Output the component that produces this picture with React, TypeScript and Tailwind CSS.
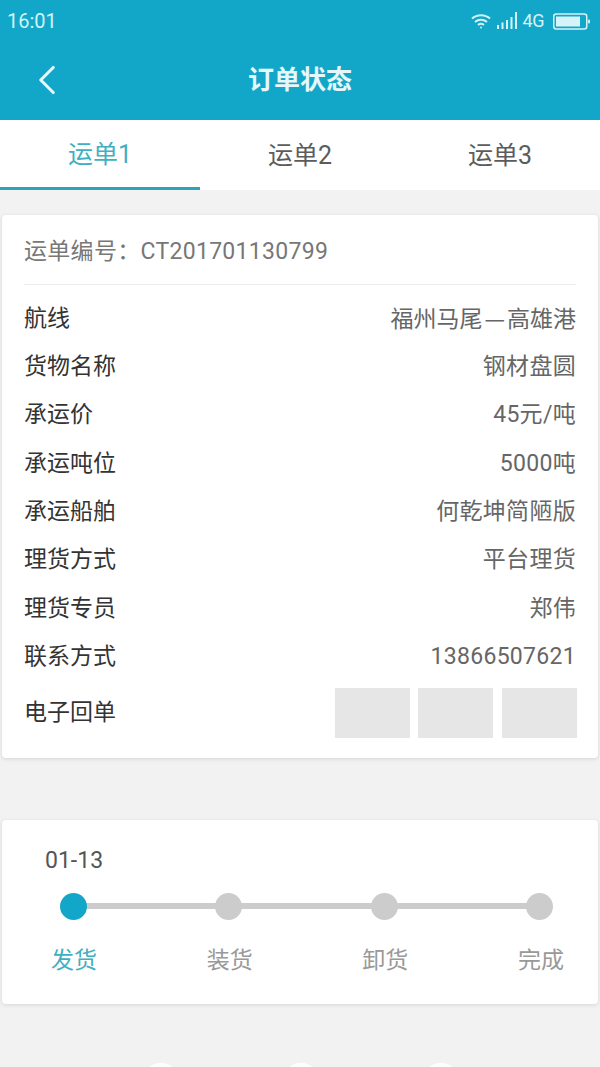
import { ChevronLeft } from 'lucide-react';

const FONT = "font-['Roboto','Noto_Sans_CJK_SC',sans-serif]";

const ROWS = [
  ['货物名称', '钢材盘圆'],
  ['承运价', '45元/吨'],
  ['承运吨位', '5000吨'],
  ['承运船舶', '何乾坤简陋版'],
  ['理货方式', '平台理货'],
  ['理货专员', '郑伟'],
  ['联系方式', '13866507621'],
];

const STEPS = ['发货', '装货', '卸货', '完成'];

function StatusIcons() {
  return (
    <div className="flex items-center gap-[6px]">
      <svg width="20" height="16" viewBox="0 0 20 16" fill="none" stroke="#d5f3f8" strokeWidth="2">
        <path d="M1 5.500C6 1 14 1 19 5.500" />
        <path d="M4 9c3.500-3 8.500-3 12 0" />
        <path d="M7 12c1.800-1.400 4.200-1.400 6 0" />
        <circle cx="10" cy="14.500" r="1" fill="#d5f3f8" stroke="none" />
      </svg>
      <svg width="20" height="18" viewBox="0 0 20 18" fill="#d5f3f8">
        <rect x="0" y="13" width="2" height="4" />
        <rect x="4.500" y="10.500" width="2" height="6.500" />
        <rect x="9" y="8" width="2" height="9" />
        <rect x="13.500" y="5" width="2" height="12" />
        <rect x="18" y="0" width="2" height="17" />
      </svg>
      <span className="text-[18px] leading-none text-[#d5f3f8] -tracking-[0.5px]">4G</span>
      <svg width="37" height="17" viewBox="0 0 37 17" className="ml-[3px]">
        <rect x="0.750" y="1" width="33" height="15" rx="2.500" fill="none" stroke="#d5f3f8" strokeWidth="1.500" />
        <rect x="3" y="3.500" width="24" height="10" fill="#d5f3f8" />
        <rect x="35" y="6.500" width="2" height="4" rx="1" fill="#d5f3f8" />
      </svg>
    </div>
  );
}

export default function App() {
  return (
    <div className={`h-[1067px] overflow-hidden bg-[#f2f2f2] ${FONT}`}>
      {/* 顶栏 */}
      <div className="h-[120px] bg-[#12a7c8]">
        <div className="flex h-[42px] items-center justify-between pl-[7px] pr-[10px]">
          <span className="text-[20px] text-[#d5f3f8]">16:01</span>
          <StatusIcons />
        </div>
        <div className="relative flex h-[76px] items-center justify-center">
          <ChevronLeft className="absolute left-[22px] top-[13px] text-[#e4f7fa]" size={50} strokeWidth={1.500} />
          <h1 className="text-[26px] font-bold text-[#e4f7fa]">订单状态</h1>
        </div>
      </div>

      {/* 运单切换 */}
      <div className="flex h-[70px] bg-white">
        {['运单1', '运单2', '运单3'].map((t, i) => (
          <div key={t} className={`flex flex-1 items-center justify-center text-[25px] ${i === 0 ? 'border-b-[3px] border-[#2ba3b8] pt-[3px] text-[#3fb0c0]' : 'pt-[1px] text-[#5c5c5c]'}`}>
            {t}
          </div>
        ))}
      </div>

      {/* 运单详情 */}
      <div className="mx-[2px] mt-[25px] h-[543px] rounded-[4px] bg-white px-[22px] shadow-[0_1px_4px_rgba(0,0,0,0.12)]">
        <div className="flex h-[70px] items-center border-b border-[#ececec] pt-[6px] text-[23px] text-[#777]">
          <span className="tracking-[0.3px]">运单编号：CT201701130799</span>
        </div>
        <div className="pt-[10px]">
          <div className="flex h-[48.300px] items-center justify-between text-[23px]">
            <span className="text-[#333]">航线</span>
            <span className="text-[#666]">福州马尾<span className="px-[2px] font-['Noto_Sans_CJK_SC',sans-serif]">—</span>高雄港</span>
          </div>
          {ROWS.map(([k, v]) => (
            <div key={k} className="flex h-[48.300px] items-center justify-between text-[23px]">
              <span className="text-[#333]">{k}</span>
              <span className="tracking-[0.3px] text-[#666]">{v}</span>
            </div>
          ))}
        </div>
        <div className="mt-[7px] flex items-center justify-between">
          <span className="text-[23px] text-[#333]">电子回单</span>
          <div className="-mr-[1px] flex">
            <div className="h-[50px] w-[75px] bg-[#e6e6e6]" />
            <div className="ml-[8px] h-[50px] w-[75px] bg-[#e6e6e6]" />
            <div className="ml-[9px] h-[50px] w-[75px] bg-[#e6e6e6]" />
          </div>
        </div>
      </div>

      {/* 进度 */}
      <div className="mx-[2px] mt-[62px] h-[184px] rounded-[4px] bg-white pl-[43px] pt-[27px] shadow-[0_1px_4px_rgba(0,0,0,0.12)]">
        <div className="text-[23px] leading-[28px] text-[#555]">01-13</div>
        <div className="relative ml-[15px] mt-[18px] flex w-[493px] justify-between">
          <div className="absolute left-[10px] right-[10px] top-[10px] h-[6px] bg-[#cccccc]" />
          {STEPS.map((s, i) => (
            <div key={s} className={`relative h-[27px] w-[27px] rounded-full ${i === 0 ? 'bg-[#12a7c8]' : 'bg-[#cccccc]'}`} />
          ))}
        </div>
        <div className="ml-[6px] mt-[24px] flex w-[513px] justify-between text-[23px] leading-[34px]">
          {STEPS.map((s, i) => (
            <span key={s} className={i === 0 ? 'text-[#3fb0c0]' : 'text-[#999]'}>{s}</span>
          ))}
        </div>
      </div>

      {/* 底部露出的图标 */}
      <div className="mt-[59px] flex justify-center gap-[104px] pl-[2px]">
        <div className="h-[36px] w-[36px] rounded-full bg-white" />
        <div className="h-[36px] w-[36px] rounded-full bg-white" />
        <div className="h-[36px] w-[36px] rounded-full bg-white" />
      </div>
    </div>
  );
}
